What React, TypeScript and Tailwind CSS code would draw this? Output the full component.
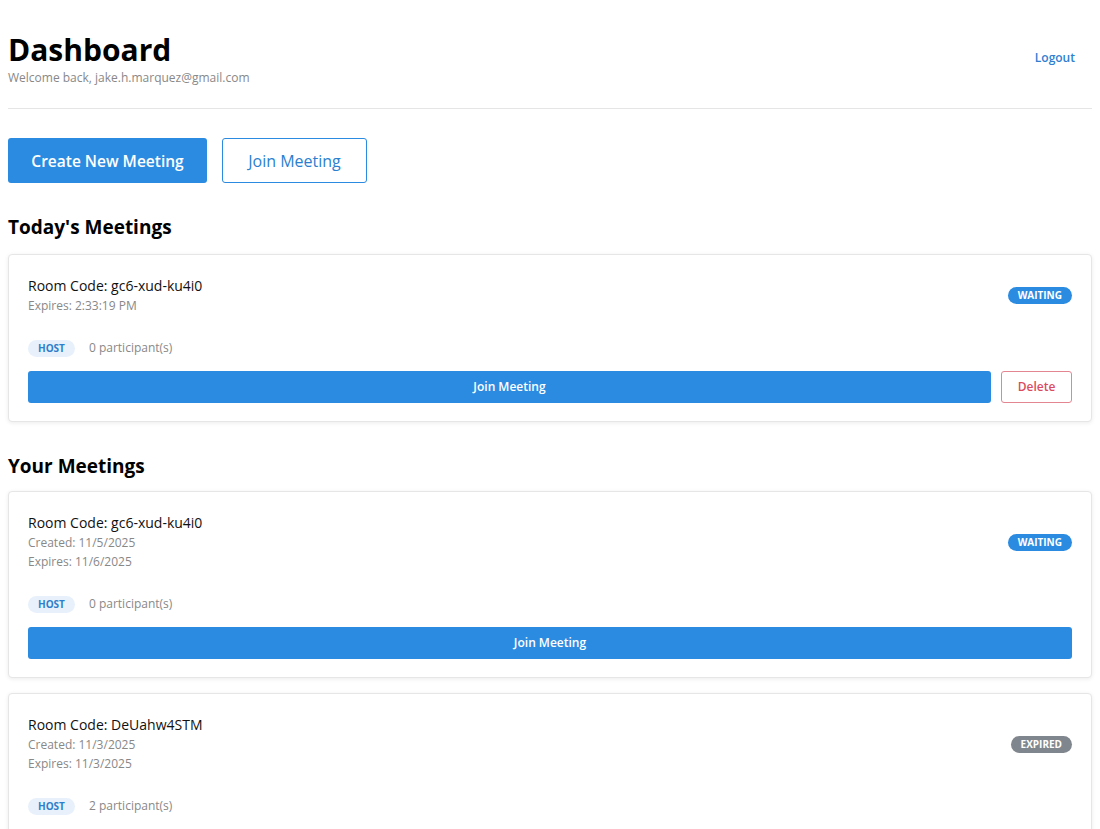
import React from "react";

type Meeting = {
  code: string;
  created?: string;
  expires: string;
  status: "WAITING" | "EXPIRED";
  participants: number;
  canJoin: boolean;
  canDelete?: boolean;
};

const today: Meeting[] = [
  { code: "gc6-xud-ku4i0", expires: "2:33:19 PM", status: "WAITING", participants: 0, canJoin: true, canDelete: true },
];

const yours: Meeting[] = [
  { code: "gc6-xud-ku4i0", created: "11/5/2025", expires: "11/6/2025", status: "WAITING", participants: 0, canJoin: true },
  { code: "DeUahw4STM", created: "11/3/2025", expires: "11/3/2025", status: "EXPIRED", participants: 2, canJoin: true },
];

function MeetingCard({ m }: { m: Meeting }) {
  return (
    <div className="rounded-[4px] border border-[#e6e6e6] bg-white px-[19px] pt-[21px] pb-[18px] shadow-[0_1px_4px_rgba(0,0,0,0.08)]">
      <div className="flex items-center justify-between">
        <div>
          <div className="text-[14px] leading-[20px] font-medium text-[#111]">Room Code: {m.code}</div>
          {m.created && <div className="text-[12px] leading-[19px] text-[#888]">Created: {m.created}</div>}
          <div className="text-[12px] leading-[19px] text-[#888]">Expires: {m.expires}</div>
        </div>
        <span
          className={
            m.status === "WAITING"
              ? "rounded-full bg-[#2b8be0] px-[10px] text-[10px] leading-[17px] font-bold text-white"
              : "rounded-full bg-[#80868d] px-[10px] text-[10px] leading-[17px] font-bold text-white"
          }
        >
          {m.status}
        </span>
      </div>
      <div className="mt-[24px] flex items-center gap-[14px]">
        <span className="rounded-full bg-[#e8f1fb] px-[10px] text-[10px] leading-[17px] font-bold text-[#2f7ecb]">HOST</span>
        <span className="text-[12px] text-[#888]">{m.participants} participant(s)</span>
      </div>
      {m.canJoin && (
        <div className="mt-[14px] flex gap-[10px]">
          <button className="h-8 flex-1 rounded-[3px] bg-[#2b8be0] text-[12px] font-semibold text-white">Join Meeting</button>
          {m.canDelete && (
            <button className="h-8 w-[71px] rounded-[3px] border border-[#e48592] bg-white text-[12px] font-semibold text-[#dc4b5e]">
              Delete
            </button>
          )}
        </div>
      )}
    </div>
  );
}

export default function App() {
  return (
    <div className="min-h-screen bg-white px-2 pt-[30px] font-['Open_Sans',sans-serif] text-black">
      <div className="flex items-center justify-between border-b border-[#e5e5e5] pb-[22px]">
        <div>
          <h1 className="text-[30px] leading-[40px] font-bold">Dashboard</h1>
          <p className="text-[12px] leading-[16px] text-[#888]">Welcome back, jake.h.marquez@gmail.com</p>
        </div>
        <button className="mr-[17px] text-[12px] font-semibold text-[#2f7fd0]">Logout</button>
      </div>

      <div className="mt-[29px] flex gap-[15px]">
        <button className="h-[45px] w-[199px] rounded-[3px] bg-[#2b8be0] pt-[2px] text-[15.5px] font-semibold text-white">Create New Meeting</button>
        <button className="h-[45px] w-[145px] rounded-[3px] border border-[#2b8be0] bg-white text-[16px] font-medium text-[#2b7fd0]">
          Join Meeting
        </button>
      </div>

      <h2 className="mt-[29px] mb-[12px] text-[19px] leading-[30px] font-bold">Today's Meetings</h2>
      <div className="flex flex-col gap-[15px]">
        {today.map((m, i) => (
          <MeetingCard key={i} m={m} />
        ))}
      </div>

      <h2 className="mt-[29px] mb-[10px] text-[19px] leading-[30px] font-bold">Your Meetings</h2>
      <div className="flex flex-col gap-[15px] pb-6">
        {yours.map((m, i) => (
          <MeetingCard key={i} m={m} />
        ))}
      </div>
    </div>
  );
}
